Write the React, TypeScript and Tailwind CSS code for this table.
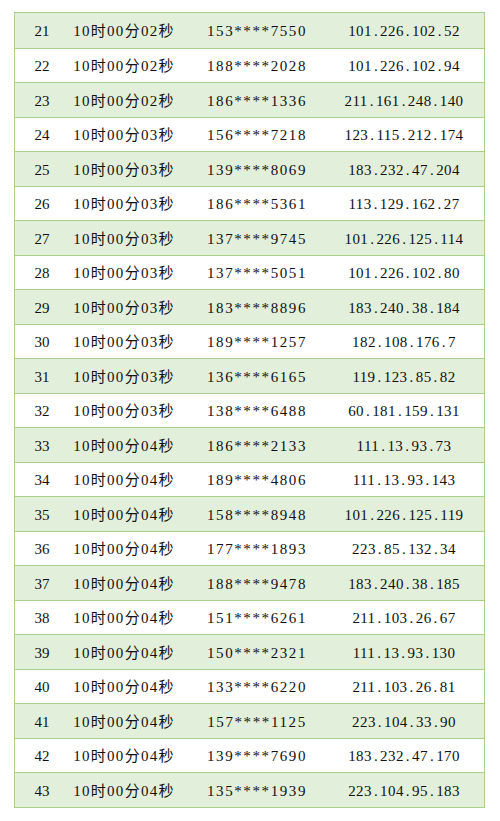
import * as React from 'react';

interface LogRow {
  no: number;
  time: string;
  phone: string;
  ip: string;
}

const ROWS: LogRow[] = [
  { no: 21, time: '10时00分02秒', phone: '153****7550', ip: '101.226.102.52' },
  { no: 22, time: '10时00分02秒', phone: '188****2028', ip: '101.226.102.94' },
  { no: 23, time: '10时00分02秒', phone: '186****1336', ip: '211.161.248.140' },
  { no: 24, time: '10时00分03秒', phone: '156****7218', ip: '123.115.212.174' },
  { no: 25, time: '10时00分03秒', phone: '139****8069', ip: '183.232.47.204' },
  { no: 26, time: '10时00分03秒', phone: '186****5361', ip: '113.129.162.27' },
  { no: 27, time: '10时00分03秒', phone: '137****9745', ip: '101.226.125.114' },
  { no: 28, time: '10时00分03秒', phone: '137****5051', ip: '101.226.102.80' },
  { no: 29, time: '10时00分03秒', phone: '183****8896', ip: '183.240.38.184' },
  { no: 30, time: '10时00分03秒', phone: '189****1257', ip: '182.108.176.7' },
  { no: 31, time: '10时00分03秒', phone: '136****6165', ip: '119.123.85.82' },
  { no: 32, time: '10时00分03秒', phone: '138****6488', ip: '60.181.159.131' },
  { no: 33, time: '10时00分04秒', phone: '186****2133', ip: '111.13.93.73' },
  { no: 34, time: '10时00分04秒', phone: '189****4806', ip: '111.13.93.143' },
  { no: 35, time: '10时00分04秒', phone: '158****8948', ip: '101.226.125.119' },
  { no: 36, time: '10时00分04秒', phone: '177****1893', ip: '223.85.132.34' },
  { no: 37, time: '10时00分04秒', phone: '188****9478', ip: '183.240.38.185' },
  { no: 38, time: '10时00分04秒', phone: '151****6261', ip: '211.103.26.67' },
  { no: 39, time: '10时00分04秒', phone: '150****2321', ip: '111.13.93.130' },
  { no: 40, time: '10时00分04秒', phone: '133****6220', ip: '211.103.26.81' },
  { no: 41, time: '10时00分04秒', phone: '157****1125', ip: '223.104.33.90' },
  { no: 42, time: '10时00分04秒', phone: '139****7690', ip: '183.232.47.170' },
  { no: 43, time: '10时00分04秒', phone: '135****1939', ip: '223.104.95.183' },
];

// SimSun-style half-width dot: widen each period so the spacing reads like the original
function IpText({ ip }: { ip: string }) {
  const parts = ip.split('.');
  return (
    <span className="tracking-[0.4px]">
      {parts.map((p, i) => (
        <React.Fragment key={i}>
          {p}
          {i < parts.length - 1 && <span className="inline-block w-[0.55em]">.</span>}
        </React.Fragment>
      ))}
    </span>
  );
}

export default function App() {
  return (
    <div className="min-h-[821px] w-[500px] bg-white pt-[12px] pl-[14px]">
      <div className="w-[471px] border-[1.5px] border-[#a9d08e] font-['Liberation_Serif','Noto_Sans_CJK_SC',serif] text-[15px] text-[#111]">
        {ROWS.map((row, i) => (
          <div
            key={row.no}
            className={
              'grid h-[34.52px] grid-cols-[54px_110px_156px_148px] items-center pt-[2px] ' +
              (i > 0 ? 'border-t-[1.5px] border-[#a9d08e] ' : '') +
              (i % 2 === 0 ? 'bg-[#e2efda]' : 'bg-white')
            }
          >
            <div className="text-center">{row.no}</div>
            <div className="text-center tracking-[1.3px]">{row.time}</div>
            <div className="text-center tracking-[1.6px]">{row.phone}</div>
            <div className="pr-[10px] text-center">
              <IpText ip={row.ip} />
            </div>
          </div>
        ))}
      </div>
    </div>
  );
}
